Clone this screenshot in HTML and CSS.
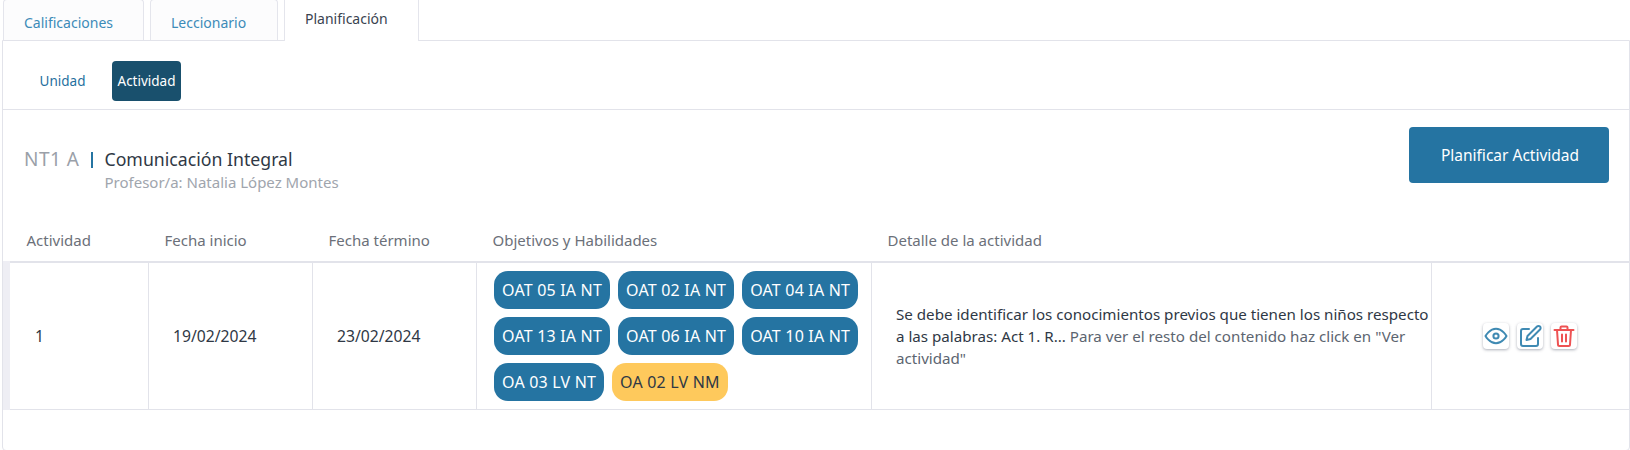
FILE: index.html
```html
<!DOCTYPE html>
<html lang="es">
  <head>
    <meta charset="UTF-8" />
    <title>Planificación</title>
    <link rel="stylesheet" href="styles.css">
  </head>
  <body>
    <div class="tabs">
      <a class="tab">Calificaciones</a>
      <a class="tab tab-lecc">Leccionario</a>
      <a class="tab tab-active">Planificación</a>
    </div>
    <div class="panel">
      <div class="subnav">
        <a class="subnav-item">Unidad</a>
        <a class="subnav-item subnav-active">Actividad</a>
      </div>
      <div class="heading">
        <div class="course">
          <span class="course-level">NT1 A</span>
          <span class="course-bar"></span>
          <div>
            <div class="course-name">Comunicación Integral</div>
            <div class="course-teacher">Profesor/a: Natalia López Montes</div>
          </div>
        </div>
        <button class="btn-plan">Planificar Actividad</button>
      </div>
      <table class="activities">
        <colgroup>
          <col class="col-num">
          <col class="col-date">
          <col class="col-date">
          <col class="col-obj">
          <col class="col-detail">
          <col>
        </colgroup>
        <thead>
          <tr>
            <th class="th-num">Actividad</th>
            <th>Fecha inicio</th>
            <th>Fecha término</th>
            <th>Objetivos y Habilidades</th>
            <th>Detalle de la actividad</th>
            <th></th>
          </tr>
        </thead>
        <tbody>
          <tr>
            <td class="td-num">1</td>
            <td class="td-date">19/02/2024</td>
            <td class="td-date">23/02/2024</td>
            <td class="td-obj">
              <div class="pills">
                <span class="pill">OAT 05 IA NT</span>
                <span class="pill">OAT 02 IA NT</span>
                <span class="pill">OAT 04 IA NT</span>
                <span class="pill">OAT 13 IA NT</span>
                <span class="pill">OAT 06 IA NT</span>
                <span class="pill">OAT 10 IA NT</span>
                <span class="pill">OA 03 LV NT</span>
                <span class="pill pill-yellow">OA 02 LV NM</span>
              </div>
            </td>
            <td class="td-detail">Se debe identificar los conocimientos previos que tienen los niños respecto a las palabras: Act 1. R... <span class="muted">Para ver el resto del contenido haz click en "Ver actividad"</span></td>
            <td class="td-actions">
              <div class="actions">
                <a class="icon-btn">
                  <svg viewBox="0 0 24 24" fill="none" stroke="#3f8ab3" stroke-width="2" stroke-linecap="round" stroke-linejoin="round"><path d="M1.500 12S5.500 4.800 12 4.800 22.500 12 22.500 12 18.500 19.200 12 19.200 1.500 12 1.500 12z"/><circle cx="12" cy="12" r="2.600"/></svg>
                </a>
                <a class="icon-btn">
                  <svg viewBox="0 0 24 24" fill="none" stroke="#3f8ab3" stroke-width="2" stroke-linecap="round" stroke-linejoin="round"><path d="M11 5H5a2 2 0 0 0-2 2v13a2 2 0 0 0 2 2h13a2 2 0 0 0 2-2v-6"/><path d="M19 2.500a2.100 2.100 0 0 1 3 3L12.500 15l-4 1 1-4z"/></svg>
                </a>
                <a class="icon-btn">
                  <svg viewBox="0 0 24 24" fill="none" stroke="#ee5253" stroke-width="2" stroke-linecap="round" stroke-linejoin="round"><path d="M2.500 6h19"/><path d="M8.500 6V3.500a1 1 0 0 1 1-1h5a1 1 0 0 1 1 1V6"/><path d="M5 6l1 14.500a1.500 1.500 0 0 0 1.500 1.500h9a1.500 1.500 0 0 0 1.500-1.500L19 6"/><path d="M10 10.500v7M14 10.500v7"/></svg>
                </a>
              </div>
            </td>
          </tr>
        </tbody>
      </table>
    </div>
  </body>
</html>
```

FILE: styles.css
```css
* {
  box-sizing: border-box;
}
body {
  margin: 0;
  height: 450px;
  overflow: hidden;
  font-family: "Noto Sans", Lato, sans-serif;
  font-size: 15px;
  color: #2f3845;
  background: #fff;
}
.tabs {
  display: flex;
  height: 41px;
  padding-left: 3px;
  gap: 6px;
  margin-top: -1px;
}
.tab {
  width: 141px;
  height: 41px;
  padding: 13px 0 0 20px;
  font-size: 14px;
  color: #3d8bb8;
  background: #fcfcfd;
  border: 1px solid #e4e5ec;
  border-bottom: none;
  border-radius: 4px 4px 0 0;
}
.tab-lecc {
  width: 128px;
}
.tab-active {
  width: 135px;
  height: 42px;
  padding: 9px 0 0 20px;
  color: #3a4350;
  background: #fff;
  border-radius: 0;
  position: relative;
  z-index: 1;
}
.panel {
  height: 411px;
  margin-left: 2px;
  border: 1px solid #e2e3ea;
  border-radius: 0 0 4px 4px;
}
.subnav {
  display: flex;
  align-items: flex-start;
  gap: 15px;
  height: 69px;
  padding: 20px 0 0 25px;
  border-bottom: 1px solid #e2e3ea;
}
.subnav-item {
  display: flex;
  align-items: center;
  justify-content: center;
  width: 69px;
  height: 40px;
  font-size: 13.500px;
  color: #1f6f9e;
  border-radius: 4px;
}
.subnav-active {
  background: #19506d;
  color: #fff;
}
.heading {
  display: flex;
  justify-content: space-between;
  height: 100px;
  padding: 17px 20px 0 21px;
}
.course {
  display: flex;
  gap: 12px;
  padding-top: 20px;
}
.course-level {
  font-size: 19px;
  line-height: 25px;
  letter-spacing: 0.500px;
  color: #9aa0a8;
}
.course-bar {
  width: 2px;
  height: 16px;
  margin: 5px -1px 0 0;
  background: #2574a2;
}
.course-name {
  font-size: 17.700px;
  line-height: 25px;
  color: #2f3845;
}
.course-teacher {
  font-size: 15px;
  line-height: 20px;
  color: #a0a5ad;
}
.btn-plan {
  width: 200px;
  height: 56px;
  padding-left: 8px;
  border: none;
  border-radius: 4px;
  background: #2574a2;
  color: #fff;
  font-family: inherit;
  font-size: 15.500px;
}
.activities {
  width: 1626px;
  border-collapse: collapse;
  table-layout: fixed;
}
.col-num {
  width: 142px;
}
.col-date {
  width: 164px;
}
.col-obj {
  width: 395px;
}
.col-detail {
  width: 560px;
}
.activities th {
  height: 52px;
  padding: 9px 0 0 16px;
  text-align: left;
  font-size: 15px;
  font-weight: 400;
  color: #6b7079;
  border-bottom: 2px solid #e2e3ea;
}
.activities th.th-num {
  padding-left: 20px;
}
.activities td {
  height: 147px;
  padding: 0;
  font-size: 15px;
  border-right: 1px solid #e2e3ea;
  border-bottom: 1px solid #e2e3ea;
}
.activities td:last-child {
  border-right: none;
}
.activities td.td-num {
  padding-left: 25px;
  font-size: 15.700px;
  border-left: 7px solid #eeeef4;
}
.activities td.td-date {
  padding-left: 24px;
  font-size: 15.700px;
}
.activities td.td-obj {
  padding-left: 17px;
}
.pills {
  display: flex;
  flex-wrap: wrap;
  gap: 8px;
}
.pill {
  display: flex;
  align-items: center;
  height: 38px;
  padding: 0 8px;
  border-radius: 14px;
  background: #2574a2;
  color: #fff;
  font-size: 16px;
  letter-spacing: 0.200px;
}
.pill-yellow {
  background: #fec95c;
  color: #2f3845;
}
.activities td.td-detail {
  padding: 0 2px 0 24px;
  font-size: 15.150px;
  line-height: 22px;
}
.muted {
  color: #5c6570;
}
.actions {
  display: flex;
  justify-content: center;
  gap: 8px;
  padding-right: 1px;
}
.icon-btn {
  display: flex;
  align-items: center;
  justify-content: center;
  width: 26px;
  height: 26px;
  border-radius: 4px;
  background: #fff;
  box-shadow: 0 1px 3px rgba(70, 80, 100, 0.45);
}
.icon-btn svg {
  width: 24px;
  height: 24px;
}
```
